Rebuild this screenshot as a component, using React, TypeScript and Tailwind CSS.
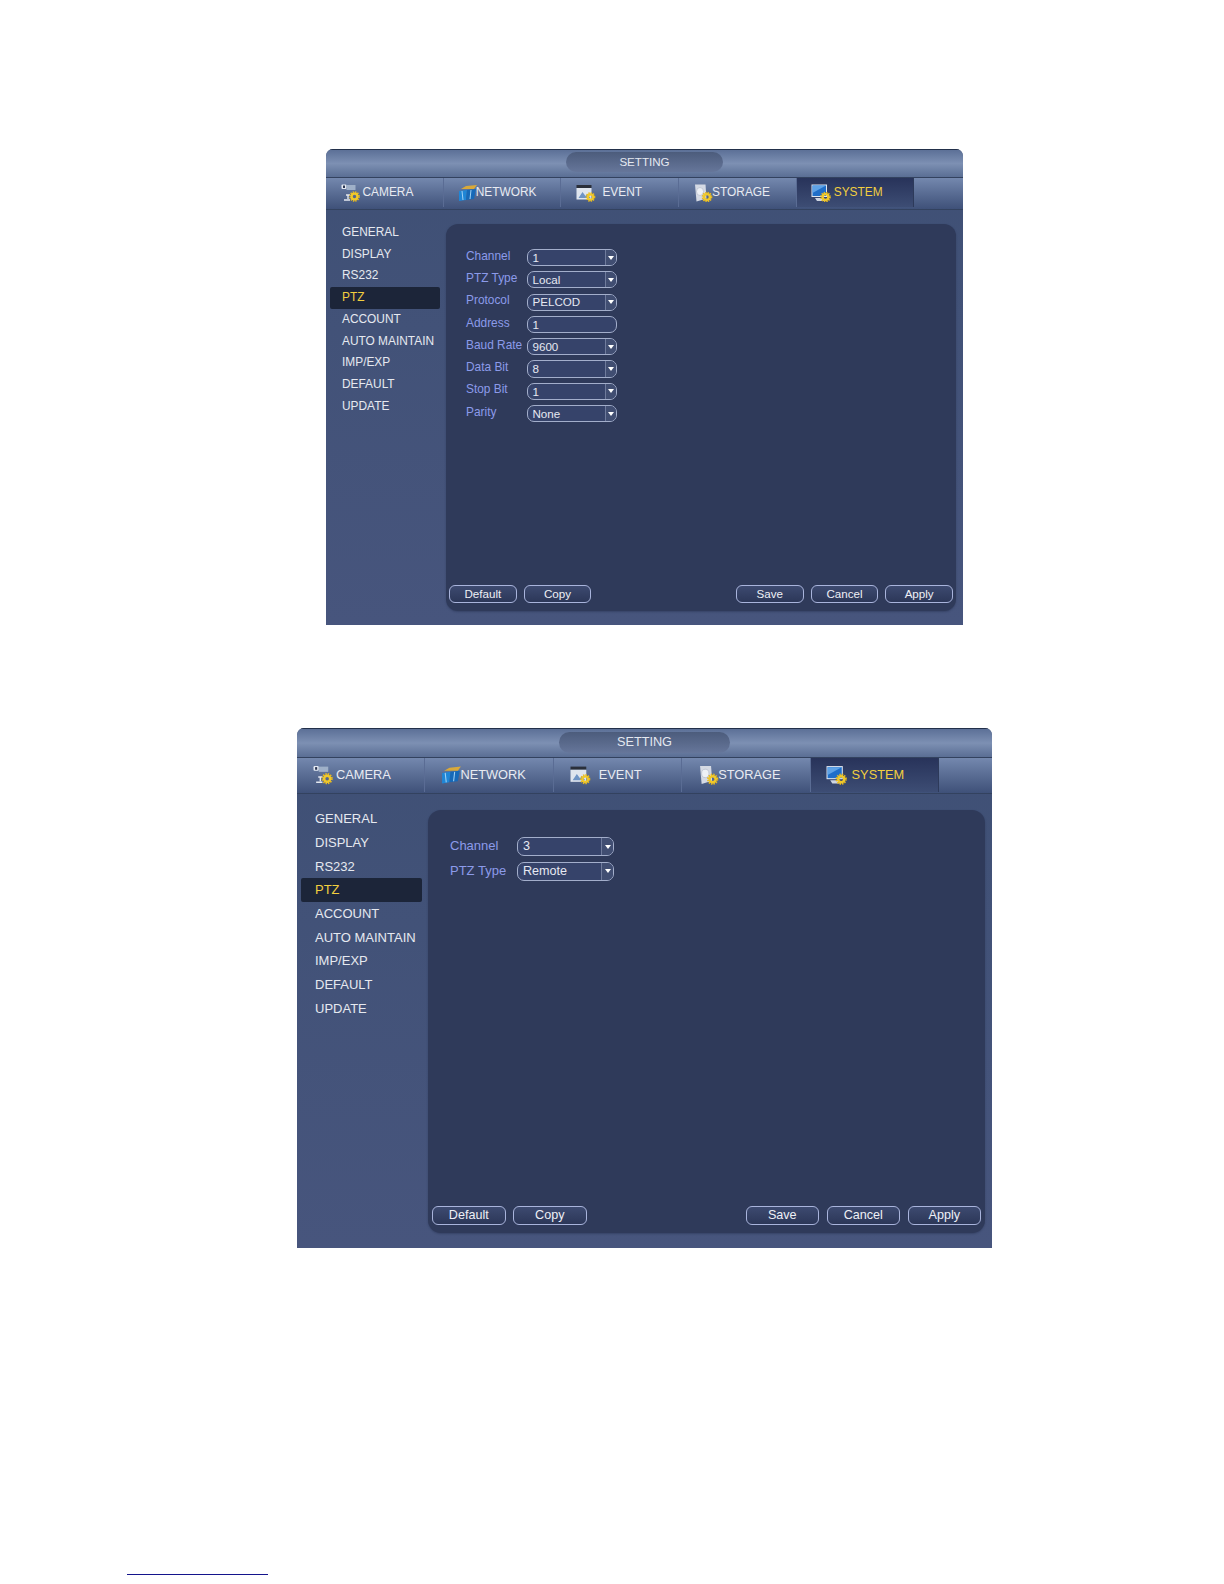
import React from 'react'

const font = { fontFamily: '"Liberation Sans", Arial, sans-serif' }

const tabs = ['CAMERA', 'NETWORK', 'EVENT', 'STORAGE', 'SYSTEM']
const menu = ['GENERAL', 'DISPLAY', 'RS232', 'PTZ', 'ACCOUNT', 'AUTO MAINTAIN', 'IMP/EXP', 'DEFAULT', 'UPDATE']

type Size = {
  panel: string
  header: string
  pill: string
  tabs: string
  tab: string
  tabLast: string
  tabPads: Record<string, string>
  iconBox: string
  sideCol: string
  sideItem: string
  sideText: string
  content: string
  form: string
  row: string
  label: string
  select: string
  arrow: string
  value: string
  btnRow: string
  btnGap: string
  btn: string
  tabText: string
}

const small: Size = {
  panel: 'w-[637px] h-[476px] ml-[326px]',
  header: 'h-[28px] pb-[3px]',
  pill: 'w-[157px] h-[20px] text-[11.6px]',
  tabs: 'h-[33px] pb-[2px]',
  tab: 'w-[117.7px]',
  tabLast: 'w-[117px]',
  tabPads: {
    CAMERA: 'pl-[15px] gap-[1.5px]',
    NETWORK: 'pl-[14px] [&>span:last-child]:-ml-[2px]',
    EVENT: 'pl-[15px] gap-[6px]',
    STORAGE: 'pl-[15px] [&>span:last-child]:-ml-[2px]',
    SYSTEM: 'pl-[14px] gap-[3px]',
  },
  iconBox: 'w-[20px] h-[18px]',
  sideCol: 'w-[120px] pt-[12px] pl-[4px]',
  sideItem: 'h-[21.75px] pl-[12px] w-[110px]',
  sideText: 'text-[11.9px]',
  content: 'w-[510px] h-[387px] mt-[14px] rounded-[12px]',
  form: 'pt-[25px] pl-[20px] gap-[5.1px]',
  row: 'h-[17.2px]',
  label: 'w-[60.5px] text-[11.9px] -mt-[2px]',
  select: 'w-[90px] h-[17.2px]',
  arrow: 'w-[11px]',
  value: 'text-[11.6px] pl-[5px]',
  btnRow: 'pb-[8px] px-[3px]',
  btnGap: 'gap-[7px]',
  btn: 'w-[67.7px] h-[18.2px] text-[11.6px]',
  tabText: 'text-[11.9px]',
}

const large: Size = {
  panel: 'w-[695px] h-[520px] ml-[297px]',
  header: 'h-[29px] pb-[1px]',
  pill: 'w-[171px] h-[21px] text-[12.7px]',
  tabs: 'h-[37px] pb-[1px]',
  tab: 'w-[128.4px]',
  tabLast: 'w-[128px]',
  tabPads: {
    CAMERA: 'pl-[16px] gap-[2px]',
    NETWORK: 'pl-[16px] [&>span:last-child]:-ml-[2px]',
    EVENT: 'pl-[16px] gap-[8px]',
    STORAGE: 'pl-[17px] [&>span:last-child]:-ml-[2px]',
    SYSTEM: 'pl-[15px] gap-[5px]',
  },
  iconBox: 'w-[21px] h-[20px]',
  sideCol: 'w-[131px] pt-[13px] pl-[4px]',
  sideItem: 'h-[23.72px] pl-[14px] w-[121px]',
  sideText: 'text-[13px]',
  content: 'w-[557px] h-[423px] mt-[16px] rounded-[13px]',
  form: 'pt-[27px] pl-[22px] gap-[5.5px]',
  row: 'h-[19.2px]',
  label: 'w-[67px] text-[13px] -mt-[2px]',
  select: 'w-[97px] h-[19.2px]',
  arrow: 'w-[12px]',
  value: 'text-[12.6px] pl-[5px]',
  btnRow: 'pb-[8px] px-[4px]',
  btnGap: 'gap-[7.5px]',
  btn: 'w-[73.5px] h-[19.5px] text-[12.6px]',
  tabText: 'text-[12.8px]',
}

const Gear = ({ x, y, r }: { x: number; y: number; r: number }) => (
  <g>
    <circle cx={x} cy={y} r={r} fill="none" stroke="#e8b91e" strokeWidth={r * 0.55} strokeDasharray="1.3 0.9" />
    <circle cx={x} cy={y} r={r * 0.68} fill="none" stroke="#f0c829" strokeWidth={r * 0.55} />
  </g>
)

const TabIcon = ({ name }: { name: string }) => {
  if (name === 'CAMERA')
    return (
      <svg viewBox="0 0 20 18" className="w-full h-full">
        <rect x="0.5" y="0.5" width="5" height="4.5" rx="1" fill="#e6ebf3" />
        <rect x="2" y="1.5" width="2" height="2.5" fill="#27324f" />
        <rect x="5.5" y="1" width="9" height="5" fill="#9fb0c8" />
        <path d="M5 11h4M7 11v4M3 16h6" stroke="#e4e8ef" strokeWidth="1.4" fill="none" />
        <Gear x={13.5} y={12.5} r={4.2} />
      </svg>
    )
  if (name === 'NETWORK')
    return (
      <svg viewBox="0 0 20 18" className="w-full h-full">
        <path d="M1 7l8-1-1 10-7 1z" fill="#1f86d6" />
        <path d="M9 6l9-1-2 10-8 1z" fill="#1669b8" />
        <path d="M3 5l5-3 11-1-3 4z" fill="#d9a93a" />
        <path d="M4 7l1 9M13 6l-1 9" stroke="#9fd2f5" strokeWidth="1" />
      </svg>
    )
  if (name === 'EVENT')
    return (
      <svg viewBox="0 0 20 18" className="w-full h-full">
        <rect x="0.5" y="1" width="15" height="3" fill="#2a2f3a" />
        <rect x="0.5" y="4" width="15" height="11.5" fill="#dfe5ee" />
        <path d="M2.5 14l4-6 3 4 2-2 3 4z" fill="#6f94c4" />
        <Gear x={14.5} y={13} r={3.8} />
      </svg>
    )
  if (name === 'STORAGE')
    return (
      <svg viewBox="0 0 20 18" className="w-full h-full">
        <path d="M1 0.5h10.5l1 14-10 3z" fill="#d5dae4" />
        <ellipse cx="6" cy="7.5" rx="3.5" ry="4" fill="#eef1f6" stroke="#aeb6c6" strokeWidth="0.6" />
        <Gear x={13} y={13} r={4.2} />
      </svg>
    )
  return (
    <svg viewBox="0 0 20 18" className="w-full h-full">
      <rect x="0.5" y="0.5" width="15.5" height="12.5" fill="#dfe6f0" />
      <rect x="1.5" y="1.5" width="13.5" height="10.5" fill="#1f6ec9" />
      <path d="M1.5 1.5H15L1.5 9z" fill="#5ea2e6" />
      <path d="M4 14h8l2 3H6z" fill="#cfd6e2" />
      <Gear x={14.5} y={13} r={4.2} />
    </svg>
  )
}

const Field = ({ s, label, value, plain }: { s: Size; label: string; value: string; plain?: boolean }) => (
  <div className={`flex items-center ${s.row}`}>
    <span className={`text-[#8c9bea] whitespace-nowrap ${s.label}`}>{label}</span>
    <div className={`flex rounded-[7px] border border-[#a3aecb] bg-[#36436a] overflow-hidden ${s.select}`}>
      <span className={`flex-1 flex items-center text-[#e6e9f2] ${s.value}`}>{value}</span>
      {!plain && (
        <span className={`flex items-center justify-center border-l border-[#6f7b9c] bg-[#414e72] ${s.arrow}`}>
          <span className="w-0 h-0 border-x-[3px] border-x-transparent border-t-[4px] border-t-white" />
        </span>
      )}
    </div>
  </div>
)

const Btn = ({ s, text }: { s: Size; text: string }) => (
  <div className={`flex items-center justify-center rounded-[6px] border border-[#a9b4dc] bg-gradient-to-b from-[#3d4a70] to-[#2c3758] text-[#eef0f6] ${s.btn}`}>
    {text}
  </div>
)

const Panel = ({ s, fields }: { s: Size; fields: { label: string; value: string; plain?: boolean }[] }) => (
  <div className={`flex flex-col rounded-t-[7px] overflow-hidden bg-gradient-to-b from-[#3f5075] to-[#47557d] ${s.panel}`}>
    {/* title bar */}
    <div className={`flex items-center justify-center border-t border-[#22304a] bg-gradient-to-b from-[#5c7097] via-[#7d90b3] to-[#5a6e94] ${s.header}`}>
      <div className={`flex items-center justify-center rounded-full bg-gradient-to-b from-[#4c5c7c] to-[#66769a] text-[#e4e8f0] ${s.pill}`}>
        SETTING
      </div>
    </div>

    {/* tabs */}
    <div className={`flex border-y border-[#33425f] bg-gradient-to-b from-[#7488ae] to-[#3f5179] ${s.tabs}`}>
      {tabs.map((t) => {
        const active = t === 'SYSTEM'
        return (
          <div
            key={t}
            className={`flex items-center ${s.tabPads[t]} ${s.tabText} ${
              active
                ? `bg-gradient-to-b from-[#28335a] to-[#3d4d74] text-[#f2cf3f] border-r border-[#2d3a5a] ${s.tabLast}`
                : `border-r border-[#5a6c94] text-[#e8ebf2] ${s.tab}`
            }`}
          >
            <span className={`block shrink-0 ${s.iconBox}`}>
              <TabIcon name={t} />
            </span>
            <span>{t}</span>
          </div>
        )
      })}
    </div>

    {/* body */}
    <div className="flex flex-1 min-h-0">
      <div className={`flex flex-col ${s.sideCol}`}>
        {menu.map((m) => (
          <div
            key={m}
            className={`flex items-center whitespace-nowrap ${s.sideItem} ${s.sideText} ${
              m === 'PTZ' ? 'bg-[#1c2539] text-[#f2cf3f] rounded-[2px]' : 'text-[#e6e9f0]'
            }`}
          >
            {m}
          </div>
        ))}
      </div>
      <div className={`flex flex-col justify-between bg-[#2f3a5a] shadow-[0_1px_2px_rgba(30,40,70,0.4)] ${s.content}`}>
        <div className={`flex flex-col ${s.form}`}>
          {fields.map((f) => (
            <Field key={f.label} s={s} {...f} />
          ))}
        </div>
        <div className={`flex justify-between ${s.btnRow}`}>
          <div className={`flex ${s.btnGap}`}>
            <Btn s={s} text="Default" />
            <Btn s={s} text="Copy" />
          </div>
          <div className={`flex ${s.btnGap}`}>
            <Btn s={s} text="Save" />
            <Btn s={s} text="Cancel" />
            <Btn s={s} text="Apply" />
          </div>
        </div>
      </div>
    </div>
  </div>
)

export default function App() {
  return (
    <div className="w-[1224px] h-[1584px] bg-white pt-[149px] overflow-hidden" style={font}>
      <Panel
        s={small}
        fields={[
          { label: 'Channel', value: '1' },
          { label: 'PTZ Type', value: 'Local' },
          { label: 'Protocol', value: 'PELCOD' },
          { label: 'Address', value: '1', plain: true },
          { label: 'Baud Rate', value: '9600' },
          { label: 'Data Bit', value: '8' },
          { label: 'Stop Bit', value: '1' },
          { label: 'Parity', value: 'None' },
        ]}
      />
      <div className="h-[103px]" />
      <Panel
        s={large}
        fields={[
          { label: 'Channel', value: '3' },
          { label: 'PTZ Type', value: 'Remote' },
        ]}
      />
      {/* footnote rule */}
      <div className="w-[141px] h-[1px] bg-[#14148c] ml-[127px] mt-[326px]" />
    </div>
  )
}
